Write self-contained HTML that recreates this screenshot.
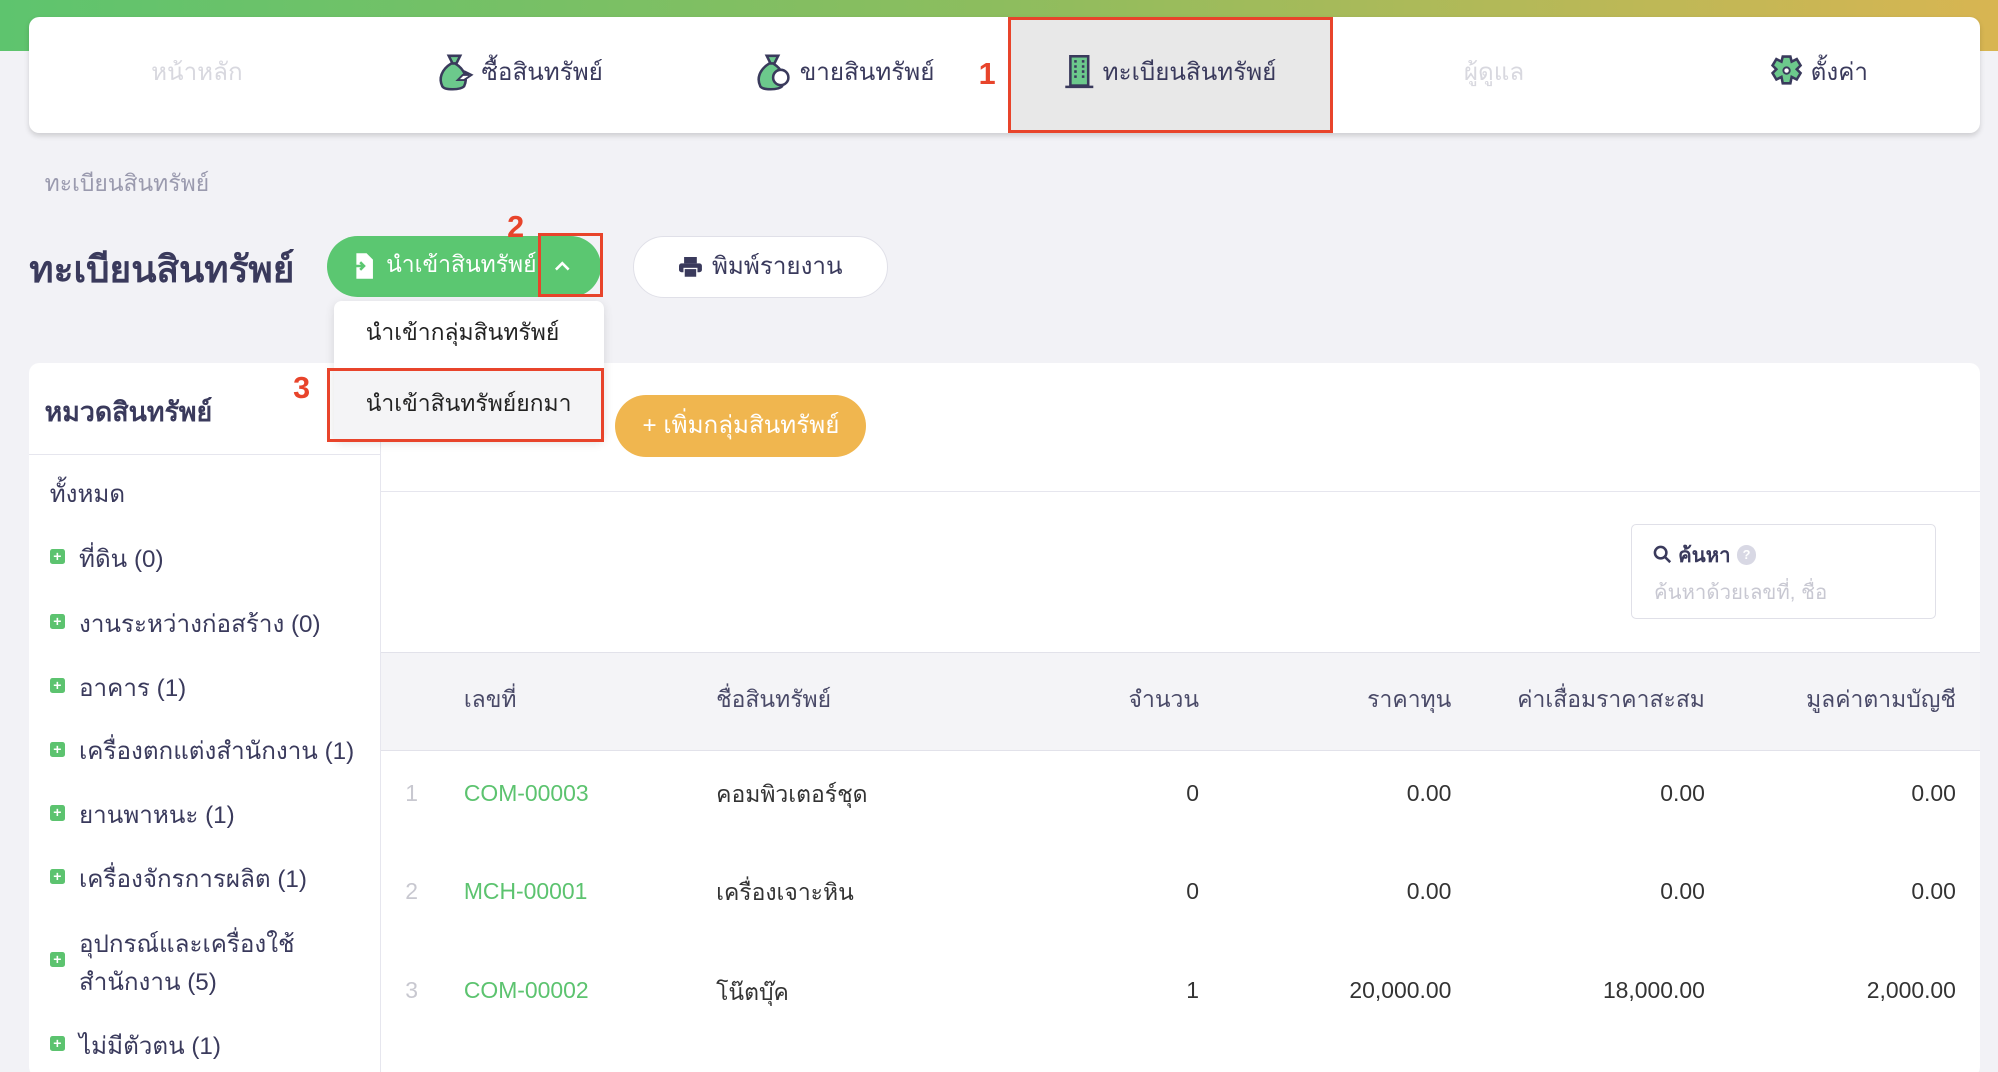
<!DOCTYPE html>
<html><head><meta charset="utf-8"><style>
*{box-sizing:border-box;margin:0;padding:0}
html,body{width:1998px;height:1072px;overflow:hidden;background:#f2f2f6}
#w{zoom:1.27423;width:1568px;height:842px;position:relative;font-family:"Liberation Sans",sans-serif;color:#3a3a5c}
.a{position:absolute;white-space:nowrap}
.top{left:0;top:0;width:1568px;height:40px;background:linear-gradient(90deg,#5ec46e,#8dbd5e 50%,#d8b552)}
.nav{left:23px;top:13px;width:1531px;height:91px;background:#fff;border-radius:8px;box-shadow:0 2px 4px rgba(0,0,0,.15)}
.tab{top:13px;height:91px;width:255px;display:flex;align-items:center;justify-content:center;font-size:19px;gap:6px;padding-bottom:4px}
.red{border:3px solid #e8442b}
.rn{color:#e8442b;font-weight:bold;font-size:24px}
.pl{width:12px;height:12px;background:#5cc36f;border-radius:2px;color:#fff;font-size:11px;line-height:12px;text-align:center;font-weight:bold}
.sb{left:62px;font-size:19px;margin-top:-2px}
.sq{left:39px}
.th{top:535px;font-size:18px;color:#4a4a68}
.td{font-size:18px;color:#333;margin-top:-1px}
.g{color:#5cc36f}
</style></head><body><div id="w">
<div class="a top"></div>
<div class="a nav"></div>
<div class="a tab" style="left:27px;color:#d8d8df">หน้าหลัก</div>
<div class="a tab" style="left:280px"><svg width="30" height="32" viewBox="0 0 30 32"><path d="M10 3h9l-3 6h-3z" fill="#6cc98c" stroke="#3a3a5c" stroke-width="2"/><path d="M12 9c-8 5-10 12-7 18 2 3 14 3 17 0 3-6 1-13-7-18z" fill="#6cc98c" stroke="#3a3a5c" stroke-width="2"/><path d="M17 22l4-4h4l-3-3 6 3-6 4z" fill="#fff" stroke="#3a3a5c" stroke-width="1.5"/></svg>ซื้อสินทรัพย์</div>
<div class="a tab" style="left:535px"><svg width="30" height="32" viewBox="0 0 30 32"><path d="M10 3h9l-3 6h-3z" fill="#6cc98c" stroke="#3a3a5c" stroke-width="2"/><path d="M12 9c-8 5-10 12-7 18 2 3 14 3 17 0 3-6 1-13-7-18z" fill="#6cc98c" stroke="#3a3a5c" stroke-width="2"/><circle cx="21" cy="20" r="6" fill="#fff" stroke="#3a3a5c" stroke-width="2"/></svg>ขายสินทรัพย์</div>
<div class="a rn" style="left:768px;top:45px">1</div>
<div class="a tab red" style="left:791px;width:255px;background:#e8e8e8"><svg width="24" height="26" viewBox="0 0 24 26"><rect x="5" y="1" width="14" height="23" fill="#6cc98c" stroke="#3a3a5c" stroke-width="2"/><path d="M1 25h22" stroke="#3a3a5c" stroke-width="2"/><path d="M8 5h2M14 5h2M8 9h2M14 9h2M8 13h2M14 13h2M8 17h2M14 17h2" stroke="#3a3a5c" stroke-width="2"/></svg>ทะเบียนสินทรัพย์</div>
<div class="a tab" style="left:1045px;color:#d8d8df">ผู้ดูแล</div>
<div class="a tab" style="left:1300px"><svg width="26" height="28" viewBox="0 0 26 28"><path d="M10 2h6l1 4 4-2 3 5-3 3 3 3-3 5-4-2-1 5h-6l-1-5-4 2-3-5 3-3-3-3 3-5 4 2z" fill="#6cc98c" stroke="#3a3a5c" stroke-width="2"/><circle cx="13" cy="13" r="2.5" fill="#fff" stroke="#3a3a5c" stroke-width="1.5"/></svg>ตั้งค่า</div>

<div class="a" style="left:35px;top:130px;font-size:18px;color:#9a9aae">ทะเบียนสินทรัพย์</div>
<div class="a" style="left:23px;top:189px;font-size:29px;font-weight:bold">ทะเบียนสินทรัพย์</div>
<div class="a" style="left:257px;top:185px;width:215px;height:48px;background:#5bc771;border-radius:24px;color:#fff;font-size:18px;display:flex;align-items:center;padding-left:18px;gap:8px"><svg width="20" height="22" viewBox="0 0 20 22"><path d="M5 1h8l5 5v15H5v-6M5 7V1" fill="#fff"/><path d="M1 11h10M8 8l3 3-3 3" stroke="#5bc771" stroke-width="2" fill="none"/></svg><span style="margin-top:-2px">นำเข้าสินทรัพย์</span></div>
<svg class="a" style="left:435px;top:204px" width="13" height="9" viewBox="0 0 13 9"><path d="M1.5 7.5l5-5 5 5" stroke="#fff" stroke-width="2" fill="none"/></svg>
<div class="a red" style="left:422px;top:183px;width:51px;height:50px"></div>
<div class="a rn" style="left:398px;top:165px">2</div>
<div class="a" style="left:497px;top:185px;width:200px;height:49px;background:#fff;border:1px solid #e0e0e8;border-radius:25px;font-size:19px;display:flex;align-items:center;justify-content:center;gap:8px"><svg width="18" height="16" viewBox="0 0 18 16"><rect x="4" y="0" width="10" height="5" fill="#3a3a5c"/><rect x="0" y="5" width="18" height="7" rx="2" fill="#3a3a5c"/><rect x="4" y="9" width="10" height="7" fill="#3a3a5c" stroke="#fff"/></svg><span style="margin-top:-2px">พิมพ์รายงาน</span></div>

<div class="a" style="left:23px;top:285px;width:1531px;height:560px;background:#fff;border-radius:8px"></div>
<div class="a" style="left:298px;top:285px;width:1px;height:560px;background:#e6e6ee"></div>
<div class="a" style="left:23px;top:356px;width:275px;height:1px;background:#e6e6ee"></div>
<div class="a" style="left:299px;top:385px;width:1255px;height:1px;background:#e6e6ee"></div>
<div class="a" style="left:35px;top:306px;font-size:21px;font-weight:bold">หมวดสินทรัพย์</div>
<div class="a" style="left:39px;top:372px;font-size:19px">ทั้งหมด</div>
<div class="a pl sq" style="top:431px">+</div><div class="a sb" style="top:425px">ที่ดิน (0)</div>
<div class="a pl sq" style="top:482px">+</div><div class="a sb" style="top:476px">งานระหว่างก่อสร้าง (0)</div>
<div class="a pl sq" style="top:532px">+</div><div class="a sb" style="top:526px">อาคาร (1)</div>
<div class="a pl sq" style="top:582px">+</div><div class="a sb" style="top:576px">เครื่องตกแต่งสำนักงาน (1)</div>
<div class="a pl sq" style="top:632px">+</div><div class="a sb" style="top:626px">ยานพาหนะ (1)</div>
<div class="a pl sq" style="top:682px">+</div><div class="a sb" style="top:676px">เครื่องจักรการผลิต (1)</div>
<div class="a pl sq" style="top:747px">+</div><div class="a sb" style="top:727px">อุปกรณ์และเครื่องใช้</div><div class="a sb" style="top:757px">สำนักงาน (5)</div>
<div class="a pl sq" style="top:813px">+</div><div class="a sb" style="top:807px">ไม่มีตัวตน (1)</div>

<div class="a" style="left:483px;top:310px;width:197px;height:49px;background:#f0b64f;border-radius:25px;color:#fff;font-size:19px;display:flex;align-items:center;justify-content:center"><span style="margin-top:-2px">+ เพิ่มกลุ่มสินทรัพย์</span></div>

<div class="a" style="left:1280px;top:411px;width:239px;height:75px;border:1px solid #e0e0e8;border-radius:4px"></div>
<div class="a" style="left:1297px;top:423px;font-size:16px;font-weight:bold;display:flex;align-items:center;gap:5px"><svg width="15" height="15" viewBox="0 0 15 15"><circle cx="6" cy="6" r="4.5" fill="none" stroke="#3a3a5c" stroke-width="2"/><path d="M9.5 9.5l4 4" stroke="#3a3a5c" stroke-width="2"/></svg>ค้นหา <span style="display:inline-block;width:15px;height:15px;border-radius:8px;background:#d8d8e4;color:#fff;font-size:10px;text-align:center;line-height:15px">?</span></div>
<div class="a" style="left:1298px;top:452px;font-size:16px;color:#c8c8d2">ค้นหาด้วยเลขที่, ชื่อ</div>

<div class="a" style="left:299px;top:512px;width:1255px;height:77px;background:#f4f4f7;border-top:1px solid #e2e2ea;border-bottom:1px solid #e2e2ea"></div>
<div class="a th" style="left:364px">เลขที่</div>
<div class="a th" style="left:562px">ชื่อสินทรัพย์</div>
<div class="a th" style="right:627px">จำนวน</div>
<div class="a th" style="right:429px">ราคาทุน</div>
<div class="a th" style="right:230px">ค่าเสื่อมราคาสะสม</div>
<div class="a th" style="right:33px">มูลค่าตามบัญชี</div>

<div class="a td" style="left:318px;top:613px;color:#c8c8d0">1</div>
<div class="a td g" style="left:364px;top:613px">COM-00003</div>
<div class="a td" style="left:562px;top:611px">คอมพิวเตอร์ชุด</div>
<div class="a td" style="right:627px;top:613px">0</div><div class="a td" style="right:429px;top:613px">0.00</div><div class="a td" style="right:230px;top:613px">0.00</div><div class="a td" style="right:33px;top:613px">0.00</div>
<div class="a td" style="left:318px;top:690px;color:#c8c8d0">2</div>
<div class="a td g" style="left:364px;top:690px">MCH-00001</div>
<div class="a td" style="left:562px;top:688px">เครื่องเจาะหิน</div>
<div class="a td" style="right:627px;top:690px">0</div><div class="a td" style="right:429px;top:690px">0.00</div><div class="a td" style="right:230px;top:690px">0.00</div><div class="a td" style="right:33px;top:690px">0.00</div>
<div class="a td" style="left:318px;top:768px;color:#c8c8d0">3</div>
<div class="a td g" style="left:364px;top:768px">COM-00002</div>
<div class="a td" style="left:562px;top:766px">โน๊ตบุ๊ค</div>
<div class="a td" style="right:627px;top:768px">1</div><div class="a td" style="right:429px;top:768px">20,000.00</div><div class="a td" style="right:230px;top:768px">18,000.00</div><div class="a td" style="right:33px;top:768px">2,000.00</div>

<div class="a" style="left:262px;top:236px;width:212px;height:109px;background:#fff;border-radius:6px;box-shadow:0 2px 8px rgba(0,0,0,.12)"></div>
<div class="a" style="left:262px;top:291px;width:212px;height:54px;background:#f4f4f6"></div>
<div class="a" style="left:287px;top:247px;font-size:18px;color:#222">นำเข้ากลุ่มสินทรัพย์</div>
<div class="a" style="left:287px;top:303px;font-size:18px;color:#222">นำเข้าสินทรัพย์ยกมา</div>
<div class="a red" style="left:257px;top:289px;width:217px;height:58px"></div>
<div class="a rn" style="left:230px;top:291px">3</div>
</div></body></html>
